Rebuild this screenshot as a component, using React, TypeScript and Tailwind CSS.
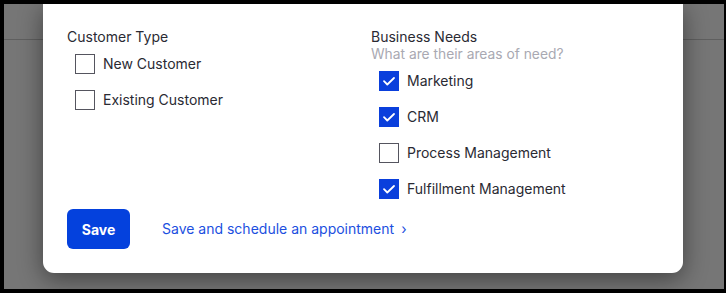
import React, { useState } from 'react';

const font = { fontFamily: 'Inter, "Noto Sans", sans-serif' };

interface CheckRowProps {
  label: string;
  checked: boolean;
  onToggle: () => void;
}

const CheckRow: React.FC<CheckRowProps> = ({ label, checked, onToggle }) => (
  <label onClick={onToggle} className="flex items-center gap-[8px] h-[20px] cursor-pointer">
    {checked ? (
      <span className="w-[20px] h-[20px] bg-[#0a3fdc] flex items-center justify-center shrink-0">
        <svg width="20" height="20" viewBox="0 0 20 20" fill="none">
          <path d="M5 10.2l3.3 3.3L15 7" stroke="white" strokeWidth="1.8" strokeLinecap="round" strokeLinejoin="round" />
        </svg>
      </span>
    ) : (
      <span className="w-[20px] h-[20px] border-[1.5px] border-[#55555f] bg-white shrink-0" />
    )}
    <span className="text-[14px] text-[#2a2a33] leading-5">{label}</span>
  </label>
);

export default function App() {
  const [customer, setCustomer] = useState({ newC: false, existing: false });
  const [needs, setNeeds] = useState({ marketing: true, crm: true, process: false, fulfillment: true });

  return (
    <div className="w-[726px] h-[293px] bg-black pt-[4px] pl-[4px] pr-[2px] pb-[4px]" style={font}>
      <div className="relative w-full h-full bg-[#767676] overflow-hidden">
        {/* page behind the overlay */}
        <div className="h-[36px] border-b border-[#5f5f5f]" />

        {/* modal */}
        <div className="absolute left-[39px] top-0 w-[640px] h-[269px] bg-white rounded-b-[11px] shadow-[0_6px_24px_rgba(0,0,0,0.45)] pl-[24px] pt-[24px]">
          <div className="grid grid-cols-[304px_304px]">
            <div>
              <div className="text-[14px] leading-[18px] text-[#2a2a33]">Customer Type</div>
              <div className="mt-[8px] pl-[8px] flex flex-col gap-[16px]">
                <CheckRow label="New Customer" checked={customer.newC} onToggle={() => setCustomer({ ...customer, newC: !customer.newC })} />
                <CheckRow label="Existing Customer" checked={customer.existing} onToggle={() => setCustomer({ ...customer, existing: !customer.existing })} />
              </div>
            </div>
            <div>
              <div className="text-[14px] leading-[18px] text-[#2a2a33]">Business Needs</div>
              <div className="text-[13.8px] leading-4 text-[#a9a9b2]">What are their areas of need?</div>
              <div className="mt-[9px] pl-[8px] flex flex-col gap-[16px]">
                <CheckRow label="Marketing" checked={needs.marketing} onToggle={() => setNeeds({ ...needs, marketing: !needs.marketing })} />
                <CheckRow label="CRM" checked={needs.crm} onToggle={() => setNeeds({ ...needs, crm: !needs.crm })} />
                <CheckRow label="Process Management" checked={needs.process} onToggle={() => setNeeds({ ...needs, process: !needs.process })} />
                <CheckRow label="Fulfillment Management" checked={needs.fulfillment} onToggle={() => setNeeds({ ...needs, fulfillment: !needs.fulfillment })} />
              </div>
            </div>
          </div>

          <div className="mt-[10px] flex items-center gap-[32px]">
            <button className="w-[63px] h-[40px] rounded-[6px] bg-[#0441dd] text-white text-[14px] font-bold">
              Save
            </button>
            <button className="text-[14px] text-[#1c4fe0] flex items-center gap-[7px] mb-[2px]">
              Save and schedule an appointment
              <span className="text-[14px]">›</span>
            </button>
          </div>
        </div>
      </div>
    </div>
  );
}
